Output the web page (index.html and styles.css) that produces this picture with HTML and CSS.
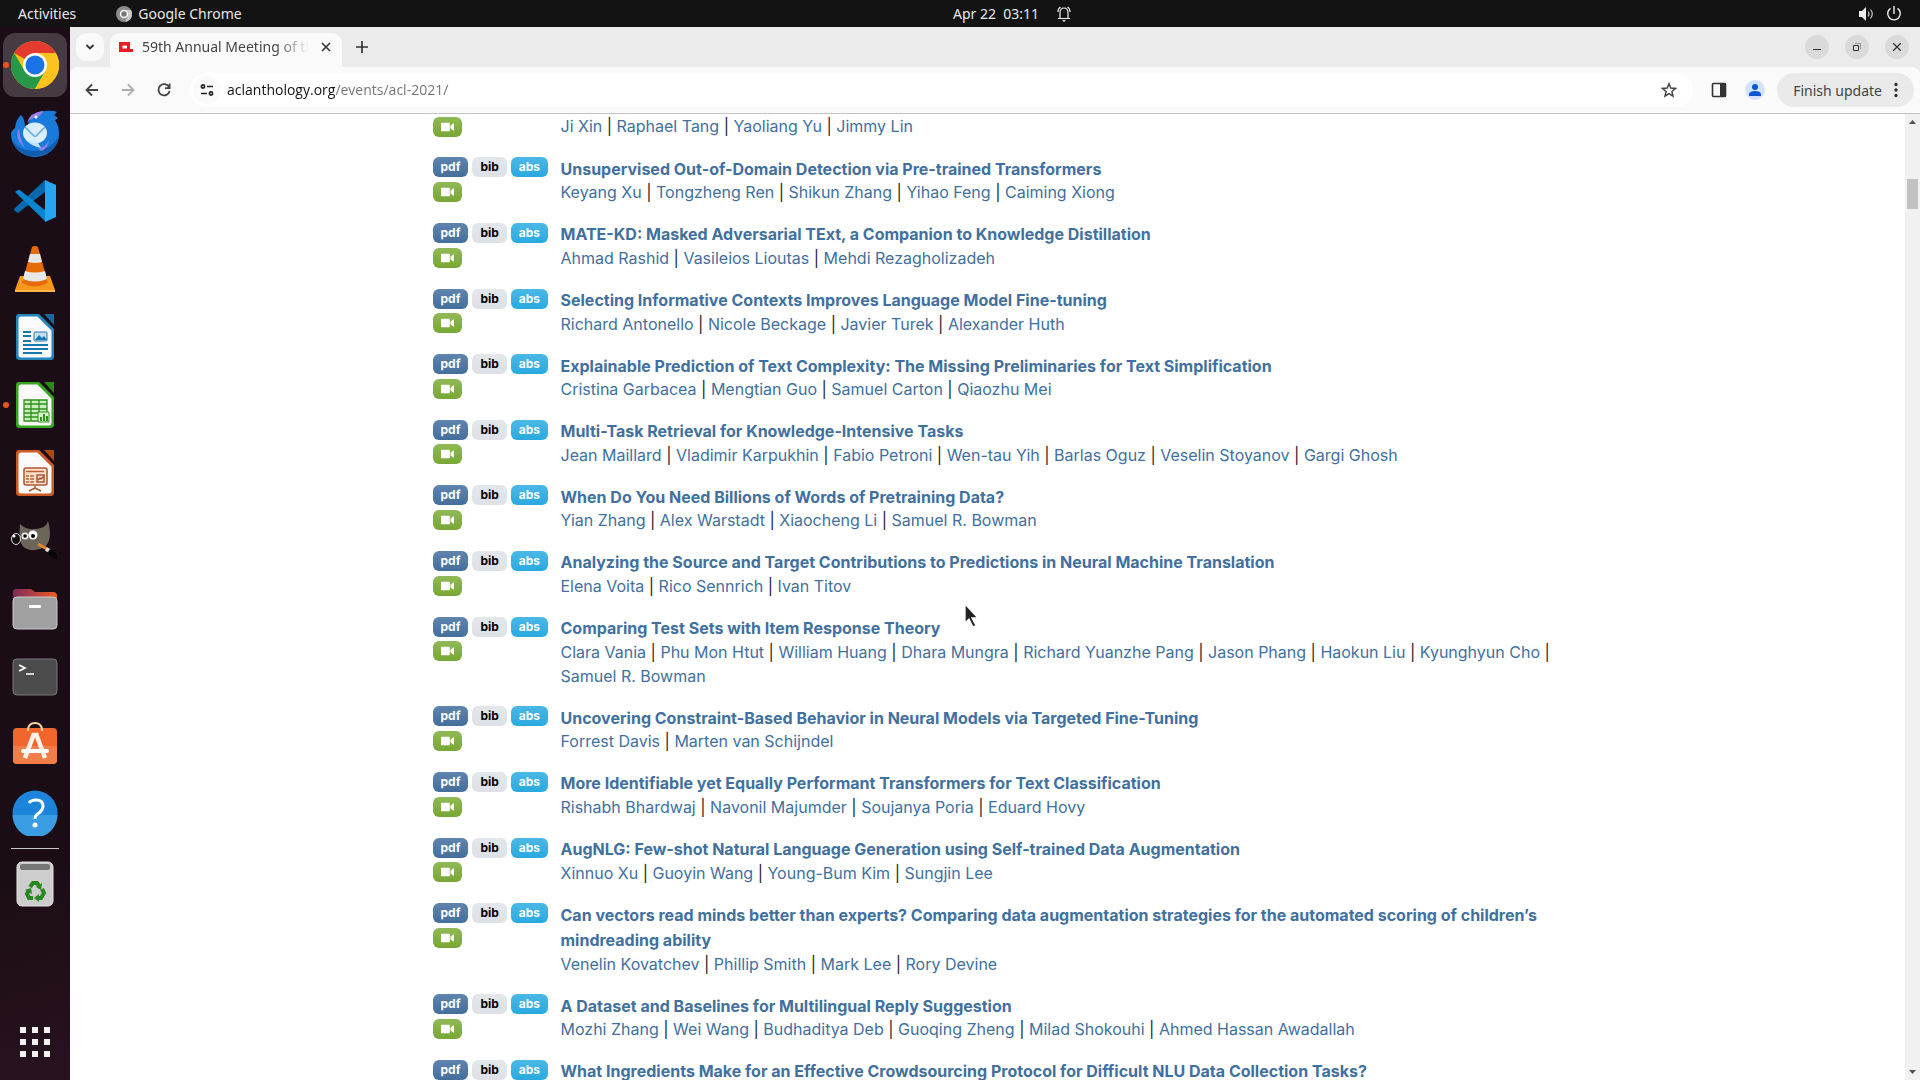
FILE: index.html
```html
<!DOCTYPE html>
<html lang="en">

<head>
    <meta charset="UTF-8" />
    <meta name="viewport" content="width=device-width, initial-scale=1.0" />
    <title>59th Annual Meeting of the Association for Computational Linguistics</title>
    <link rel="stylesheet" href="styles.css">
</head>

<body>
    <!-- shared icon -->
    <svg class="sprite" aria-hidden="true">
        <symbol id="video" viewBox="0 0 14 10">
            <path d="M0 1.2Q0 .5.7.5h8.1q.7 0 .7.7v7.6q0 .7-.7.7H.7Q0 9.500 0 8.800zM10.200 3.600 13 1.200q1-.5 1 .5v6.600q0 1-1 .5L10.200 6.400z" fill="#fff" />
        </symbol>
    </svg>

    <header class="topbar">
        <div class="topbar-left">
            <button>Activities</button>
            <button class="app-menu">
                <svg width="16" height="16" viewBox="0 0 16 16"><circle cx="8" cy="8" r="8" fill="#8b8b8b" /><path d="M8 4h7A8 8 0 0 1 9 16l3-6z" fill="#c8c8c8" /><circle cx="8" cy="8" r="3.500" fill="#777" stroke="#fff" stroke-width="1.500" /></svg>
                Google Chrome
            </button>
        </div>
        <button class="clock">Apr 22&nbsp; 03:11
            <svg width="14" height="16" viewBox="0 0 14 16" fill="none" stroke="#eee" stroke-width="1.200"><path d="M1 12.500h12M3 12V7q0-5 4-5t4 5v5M1 6q0-3.500 2.500-5M13 6q0-3.500-2.500-5" /><path d="M5 14h4l-2 2z" fill="#eee" stroke="none" /></svg>
        </button>
        <div class="topbar-right">
            <svg width="16" height="16" viewBox="0 0 16 16"><path d="M1 5h3l4-4v14l-4-4H1z" fill="#eee" /><path d="M10 5.500q2 2.500 0 5M12.500 3.500q3.500 4.500 0 9" fill="none" stroke="#ccc" stroke-width="1.200" /></svg>
            <svg width="16" height="16" viewBox="0 0 16 16" fill="none" stroke="#eee" stroke-width="1.400"><path d="M8 0v8M4.500 2.300a6.300 6.300 0 1 0 7 0" /></svg>
        </div>
    </header>

    <div class="desktop">
        <nav class="dock">
            <button class="dock-item active running" aria-label="Google Chrome">
                <svg width="48" height="48" viewBox="0 0 48 48"><circle cx="24" cy="24" r="24" fill="#fbc116" /><path d="M24 24 3.200 12A24 24 0 0 1 44.800 12z" fill="#e33b2e" /><path d="M3.200 12A24 24 0 0 0 24 48l10.400-18L24 24 13.600 30z" fill="#279847" /><path d="M24 12h20.800A24 24 0 0 1 24 48l10.400-18z" fill="#fcc31e" /><circle cx="24" cy="24" r="12" fill="#fff" /><circle cx="24" cy="24" r="9.500" fill="#1a73e8" /></svg>
            </button>
            <button class="dock-item" aria-label="Thunderbird">
                <svg width="48" height="48" viewBox="0 0 48 48"><path d="M0 24Q1 21 4 19 5 10 10 6q4 4 4 12l3-3Q22 2 34 2q8-1 12 1l-3 3 4 3-3 2q4 6 4 14a24 23 0 0 1-48 0z" fill="#187bdc" /><path d="M1 31Q9 43 25 42 41 40 48 27A24 22 0 0 1 1 31z" fill="#105cae" /><path d="M16 14Q19 3 32 2q-1 5-9 7-4 1-7 5z" fill="#977ee8" /><circle cx="25" cy="8" r="1.500" fill="#fff" /><path d="M8 19q-5 11 6 20-5-8-6-20zM27 39q8-1 11-8-1 9-8 11z" fill="#8b80ec" /><ellipse cx="24" cy="24" rx="12" ry="10.500" fill="#d9efff" /><path d="M15 31q5 6 15 8l-3-5z" fill="#c3e5ff" /><path d="m14 18 9 9q1 1 2 0l9-9" fill="none" stroke="#65a7df" stroke-width="1.500" /></svg>
            </button>
            <button class="dock-item" aria-label="Visual Studio Code">
                <svg width="42" height="42" viewBox="0 0 42 42"><path d="M1 28q-2 2 0 3l3 2 27-21V0z" fill="#0768ad" /><path d="m1 12 3-2q1-1 3 1l25 20v11z" fill="#0a85d1" /><path d="M31 0 42 5v32l-11 5z" fill="#26a6f2" /></svg>
            </button>
            <button class="dock-item" aria-label="VLC">
                <svg width="40" height="46" viewBox="0 0 40 46"><path d="M5 30h30l5 14v2H0v-2z" fill="#f79a1b" /><path d="M0 44h40v2H0z" fill="#ffb647" /><path d="M17 1q3-2 6 0l10 36q-13 7-26 0z" fill="#e66c0a" /><path d="M15 8h10l2 8q-7 2-14 0zM10 25q10 3 20 0l2 8q-12 5-24 0z" fill="#e8e8e8" /></svg>
            </button>
            <button class="dock-item" aria-label="LibreOffice Writer">
                <svg width="38" height="46" viewBox="0 0 38 46"><path d="M5 1h17l15 15v25q0 4-4 4H5q-4 0-4-4V5q0-4 4-4z" fill="#fafafa" stroke="#2285bb" stroke-width="3" /><path d="M28 0h10v11z" fill="#116b9e" /><path d="M7 18h8M7 22h8M7 27h8M7 31h25M7 35h25M7 39h19" stroke="#1377b2" stroke-width="2" /><rect x="18" y="18" width="13" height="9" rx="1" fill="#c3e1f1" stroke="#2c7ba8" /><path d="m19 26 4-5 3 3 2-2 3 4z" fill="#1377b2" /></svg>
            </button>
            <button class="dock-item running" aria-label="LibreOffice Calc">
                <svg width="38" height="46" viewBox="0 0 38 46"><path d="M5 1h17l15 15v25q0 4-4 4H5q-4 0-4-4V5q0-4 4-4z" fill="#fafafa" stroke="#36a51f" stroke-width="3" /><path d="M28 0h10v11z" fill="#268c12" /><path d="M8 18h23v21H8z" fill="#c9efbd" /><path d="M8 18h23v21H8zM8 22h23M8 27h23M8 31h23M8 35h23M15 18v21M23 18v21" fill="none" stroke="#2d9219" stroke-width="1.300" /><path d="M22 30h11v10H22z" fill="#d6f5cc" stroke="#2d9219" /><path d="M25 39v-4M28 39v-7M31 39v-5" stroke="#2d9219" stroke-width="2" /></svg>
            </button>
            <button class="dock-item" aria-label="LibreOffice Impress">
                <svg width="38" height="46" viewBox="0 0 38 46"><path d="M5 1h17l15 15v25q0 4-4 4H5q-4 0-4-4V5q0-4 4-4z" fill="#fafafa" stroke="#cd5923" stroke-width="3" /><path d="M28 0h10v11z" fill="#af450f" /><rect x="8" y="18" width="23" height="17" rx="2" fill="#fae1d2" stroke="#ad562d" stroke-width="1.500" /><path d="M10 21.500h18M10 26h3M14 26h4M10 29h3M14 29h4M10 32h3M14 32h4" stroke="#c15e30" stroke-width="1.700" /><path d="M21 25h7v7h-7zM22 30l2-2 1 1 3-3M19 36v2l-6 3M19 38l6 3" fill="none" stroke="#ad562d" stroke-width="1.500" /></svg>
            </button>
            <button class="dock-item" aria-label="GIMP">
                <svg width="48" height="40" viewBox="0 0 48 40"><path d="M9 3q6 6 14 5Q35 8 37 0q5 18-3 26-11 6-20 1Q7 23 9 3z" fill="#6b6659" /><ellipse cx="5" cy="18" rx="4.500" ry="5.500" fill="#111" stroke="#ddd" /><circle cx="3" cy="15" r="1.500" fill="#fff" /><circle cx="14" cy="15" r="3.500" fill="#eee" /><circle cx="22" cy="14" r="4.500" fill="#fff" /><circle cx="14" cy="15" r="1.800" /><circle cx="22" cy="15" r="2" /><path d="m27 23 9 5" stroke="#e6892c" stroke-width="3" /><path d="m35 28 4 2" stroke="#ddd" stroke-width="4" /><path d="M39 28q7 2 7 10-8-1-9-7z" fill="#050505" /></svg>
            </button>
            <button class="dock-item" aria-label="Files">
                <svg width="46" height="42" viewBox="0 0 46 42"><defs><linearGradient id="folder"><stop stop-color="#7b2a5a" /><stop offset="1" stop-color="#ef5a24" /></linearGradient></defs><path d="M1 4q0-3 3-3h15l4 3h18q4 0 4 4v12H1z" fill="url(#folder)" /><rect x="1" y="9" width="44" height="32" rx="4" fill="#a0a0a0" stroke="#c8c8c8" /><rect x="17" y="17" width="12" height="3" rx="1" fill="#fff" /></svg>
            </button>
            <button class="dock-item" aria-label="Terminal">
                <svg width="46" height="38" viewBox="0 0 46 38"><rect x="1" y="1" width="44" height="36" rx="4" fill="#4c4c4c" stroke="#777" /><path d="m7 7 6 3-6 3M14 16h8" fill="none" stroke="#fff" stroke-width="1.700" /></svg>
            </button>
            <button class="dock-item" aria-label="Ubuntu Software">
                <svg width="46" height="46" viewBox="0 3 46 46"><rect x="1" y="9" width="44" height="36" rx="4" fill="#f0662c" /><path d="M1 27h44v14q0 4-4 4H5q-4 0-4-4z" fill="#f17d49" /><path d="M16 12v-2q1-6 7-6t7 6v2" fill="none" stroke="#f8d39d" stroke-width="2" /><path d="m13 39 8.500-23h3L33 39" fill="none" stroke="#fff1e8" stroke-width="4.500" /><path d="M11 32h24" stroke="#fff" stroke-width="4" stroke-linecap="round" /></svg>
            </button>
            <button class="dock-item" aria-label="Help">
                <svg width="46" height="46" viewBox="0 0 46 46"><circle cx="23" cy="23" r="22.500" fill="#1c85db" /><path d="M.5 25h45a22.500 22.500 0 0 1-45 0z" fill="#3a9ce2" /><path d="M17 13q2-3 7-3 7 0 7 6 0 4-4 7-4 2-4 6" fill="none" stroke="#fff" stroke-width="3" /><circle cx="23" cy="35" r="2.500" fill="#fff" /></svg>
            </button>
            <hr>
            <button class="dock-item" aria-label="Trash">
                <svg width="38" height="46" viewBox="0 0 38 46"><rect x="1" y="1" width="36" height="44" rx="5" fill="#cdcdcd" stroke="#e4e4e4" /><rect x="4" y="3" width="30" height="6" rx="2" fill="#767676" /><g fill="none" stroke="#278720" stroke-width="4"><path d="m14 26 3-4h4l3 4" /><path d="m26 28 2 4-3 5h-4" /><path d="M17 37h-4l-2-4 2-4" /></g><path d="m26 22-1 7-5-3zM23 33v8l-5-4zM9 29l6-2 1 6z" fill="#278720" /></svg>
            </button>
            <button class="dock-item apps" aria-label="Show Applications">
                <svg width="30" height="30" viewBox="0 0 30 30"><path d="M3 0v30M15 0v30M27 0v30" stroke="#f2f2f2" stroke-width="6" stroke-dasharray="6" /></svg>
            </button>
        </nav>

        <div class="browser">
            <div class="tabstrip">
                <button class="tab-search" aria-label="Search tabs">
                    <svg width="10" height="10" viewBox="0 0 10 10" fill="none" stroke="#333" stroke-width="1.800"><path d="m1.500 3 3.500 3.500L8.500 3" /></svg>
                </button>
                <div class="tab">
                    <svg width="14" height="10" viewBox="0 0 14 10"><path d="M0 0h11v7h3v3H0zM3.500 3.500v3H8v-3z" fill="#ed1c24" fill-rule="evenodd" /></svg>
                    <span class="tab-title">59th Annual Meeting of the Association</span>
                    <button aria-label="Close tab">
                        <svg width="10" height="10" viewBox="0 0 10 10" stroke="#333" stroke-width="1.600"><path d="m1 1 8 8M9 1 1 9" /></svg>
                    </button>
                </div>
                <button class="new-tab" aria-label="New tab">
                    <svg width="12" height="12" viewBox="0 0 12 12" stroke="#333" stroke-width="1.700"><path d="M6 0v12M0 6h12" /></svg>
                </button>
                <div class="window-buttons">
                    <button aria-label="Minimize"><svg width="8" height="8" viewBox="0 0 8 8"><path d="M0 6h8v1H0z" fill="#333" /></svg></button>
                    <button aria-label="Restore"><svg width="8" height="8" viewBox="0 0 8 8" fill="none"><path d="M2 .5h5.500V6" stroke="#999" /><path d="M.5 2.500h5v5h-5z" stroke="#333" /></svg></button>
                    <button aria-label="Close"><svg width="8" height="8" viewBox="0 0 8 8" stroke="#333" stroke-width="1.300"><path d="m0 0 8 8M8 0 0 8" /></svg></button>
                </div>
            </div>

            <div class="toolbar">
                <button class="tool" aria-label="Back"><svg width="14" height="14" viewBox="0 0 14 14" fill="none" stroke="#444" stroke-width="1.800"><path d="M13 7H2M7 1.500 1.500 7 7 12.500" /></svg></button>
                <button class="tool" aria-label="Forward"><svg width="14" height="14" viewBox="0 0 14 14" fill="none" stroke="#adadad" stroke-width="1.800"><path d="M1 7h11M7 1.500 12.500 7 7 12.500" /></svg></button>
                <button class="tool" aria-label="Reload"><svg width="14" height="14" viewBox="0 0 14 14" fill="none" stroke="#444" stroke-width="1.800"><path d="M12 4a5.600 5.600 0 1 0 .6 4M12.600.5v4.600H8" /></svg></button>
                <div class="omnibox">
                    <button class="site-info" aria-label="View site information"><svg width="14" height="12" viewBox="0 0 14 12" fill="none" stroke="#222" stroke-width="1.700"><circle cx="3" cy="2.500" r="1.600" /><path d="M7 2.500h6M1 9.500h6" /><circle cx="11" cy="9.500" r="1.600" /></svg></button>
                    <input type="text" class="url" aria-label="Address and search bar" value="aclanthology.org/events/acl-2021/" />
                    <button class="star" aria-label="Bookmark this tab"><svg width="16" height="16" viewBox="0 0 16 16" fill="none" stroke="#444" stroke-width="1.500"><path d="m8 1.800 1.800 4.300 4.700.4-3.600 3 1.100 4.600L8 11.600l-4 2.500 1.100-4.600-3.600-3 4.700-.4z" /></svg></button>
                </div>
                <button class="tool" aria-label="Side panel"><svg width="16" height="16" viewBox="0 0 16 16"><rect x="1.500" y="1.500" width="13" height="13" rx="1" fill="none" stroke="#333" stroke-width="1.600" /><path d="M9 1h6v14H9z" fill="#333" /></svg></button>
                <button class="tool" aria-label="Profile"><svg width="20" height="20" viewBox="0 0 20 20"><circle cx="10" cy="10" r="10" fill="#d3e3fd" /><circle cx="10" cy="7" r="3" fill="#0b57d0" /><path d="M4 16v-1.500q0-3.500 6-3.500t6 3.500V16z" fill="#0b57d0" /></svg></button>
                <button class="update">Finish update
                    <svg width="4" height="16" viewBox="0 0 4 16" fill="#333"><circle cx="2" cy="2.500" r="1.700" /><circle cx="2" cy="8" r="1.700" /><circle cx="2" cy="13.500" r="1.700" /></svg>
                </button>
            </div>

            <div class="viewport">
                <main>
                    <div class="paper">
                        <div class="links"><a href="#" class="badge video" aria-label="video"><svg><use href="#video" /></svg></a></div>
                        <div><a href="#">Ji Xin</a> | <a href="#">Raphael Tang</a> | <a href="#">Yaoliang Yu</a> | <a href="#">Jimmy Lin</a></div>
                    </div>
                    <div class="paper">
                        <div class="links"><a href="#" class="badge pdf">pdf</a><a href="#" class="badge bib">bib</a><a href="#" class="badge abs">abs</a><br><a href="#" class="badge video" aria-label="video"><svg><use href="#video" /></svg></a></div>
                        <div><a href="#" class="title">Unsupervised Out-of-Domain Detection via Pre-trained Transformers</a><br>
                            <a href="#">Keyang Xu</a> | <a href="#">Tongzheng Ren</a> | <a href="#">Shikun Zhang</a> | <a href="#">Yihao Feng</a> | <a href="#">Caiming Xiong</a></div>
                    </div>
                    <div class="paper">
                        <div class="links"><a href="#" class="badge pdf">pdf</a><a href="#" class="badge bib">bib</a><a href="#" class="badge abs">abs</a><br><a href="#" class="badge video" aria-label="video"><svg><use href="#video" /></svg></a></div>
                        <div><a href="#" class="title">MATE-KD: Masked Adversarial TExt, a Companion to Knowledge Distillation</a><br>
                            <a href="#">Ahmad Rashid</a> | <a href="#">Vasileios Lioutas</a> | <a href="#">Mehdi Rezagholizadeh</a></div>
                    </div>
                    <div class="paper">
                        <div class="links"><a href="#" class="badge pdf">pdf</a><a href="#" class="badge bib">bib</a><a href="#" class="badge abs">abs</a><br><a href="#" class="badge video" aria-label="video"><svg><use href="#video" /></svg></a></div>
                        <div><a href="#" class="title">Selecting Informative Contexts Improves Language Model Fine-tuning</a><br>
                            <a href="#">Richard Antonello</a> | <a href="#">Nicole Beckage</a> | <a href="#">Javier Turek</a> | <a href="#">Alexander Huth</a></div>
                    </div>
                    <div class="paper">
                        <div class="links"><a href="#" class="badge pdf">pdf</a><a href="#" class="badge bib">bib</a><a href="#" class="badge abs">abs</a><br><a href="#" class="badge video" aria-label="video"><svg><use href="#video" /></svg></a></div>
                        <div><a href="#" class="title">Explainable Prediction of Text Complexity: The Missing Preliminaries for Text Simplification</a><br>
                            <a href="#">Cristina Garbacea</a> | <a href="#">Mengtian Guo</a> | <a href="#">Samuel Carton</a> | <a href="#">Qiaozhu Mei</a></div>
                    </div>
                    <div class="paper">
                        <div class="links"><a href="#" class="badge pdf">pdf</a><a href="#" class="badge bib">bib</a><a href="#" class="badge abs">abs</a><br><a href="#" class="badge video" aria-label="video"><svg><use href="#video" /></svg></a></div>
                        <div><a href="#" class="title">Multi-Task Retrieval for Knowledge-Intensive Tasks</a><br>
                            <a href="#">Jean Maillard</a> | <a href="#">Vladimir Karpukhin</a> | <a href="#">Fabio Petroni</a> | <a href="#">Wen-tau Yih</a> | <a href="#">Barlas Oguz</a> | <a href="#">Veselin Stoyanov</a> | <a href="#">Gargi Ghosh</a></div>
                    </div>
                    <div class="paper">
                        <div class="links"><a href="#" class="badge pdf">pdf</a><a href="#" class="badge bib">bib</a><a href="#" class="badge abs">abs</a><br><a href="#" class="badge video" aria-label="video"><svg><use href="#video" /></svg></a></div>
                        <div><a href="#" class="title">When Do You Need Billions of Words of Pretraining Data?</a><br>
                            <a href="#">Yian Zhang</a> | <a href="#">Alex Warstadt</a> | <a href="#">Xiaocheng Li</a> | <a href="#">Samuel R. Bowman</a></div>
                    </div>
                    <div class="paper">
                        <div class="links"><a href="#" class="badge pdf">pdf</a><a href="#" class="badge bib">bib</a><a href="#" class="badge abs">abs</a><br><a href="#" class="badge video" aria-label="video"><svg><use href="#video" /></svg></a></div>
                        <div><a href="#" class="title">Analyzing the Source and Target Contributions to Predictions in Neural Machine Translation</a><br>
                            <a href="#">Elena Voita</a> | <a href="#">Rico Sennrich</a> | <a href="#">Ivan Titov</a></div>
                    </div>
                    <div class="paper">
                        <div class="links"><a href="#" class="badge pdf">pdf</a><a href="#" class="badge bib">bib</a><a href="#" class="badge abs">abs</a><br><a href="#" class="badge video" aria-label="video"><svg><use href="#video" /></svg></a></div>
                        <div><a href="#" class="title">Comparing Test Sets with Item Response Theory</a><br>
                            <a href="#">Clara Vania</a> | <a href="#">Phu Mon Htut</a> | <a href="#">William Huang</a> | <a href="#">Dhara Mungra</a> | <a href="#">Richard Yuanzhe Pang</a> | <a href="#">Jason Phang</a> | <a href="#">Haokun Liu</a> | <a href="#">Kyunghyun Cho</a> | <a href="#">Samuel R. Bowman</a></div>
                    </div>
                    <div class="paper">
                        <div class="links"><a href="#" class="badge pdf">pdf</a><a href="#" class="badge bib">bib</a><a href="#" class="badge abs">abs</a><br><a href="#" class="badge video" aria-label="video"><svg><use href="#video" /></svg></a></div>
                        <div><a href="#" class="title">Uncovering Constraint-Based Behavior in Neural Models via Targeted Fine-Tuning</a><br>
                            <a href="#">Forrest Davis</a> | <a href="#">Marten van Schijndel</a></div>
                    </div>
                    <div class="paper">
                        <div class="links"><a href="#" class="badge pdf">pdf</a><a href="#" class="badge bib">bib</a><a href="#" class="badge abs">abs</a><br><a href="#" class="badge video" aria-label="video"><svg><use href="#video" /></svg></a></div>
                        <div><a href="#" class="title">More Identifiable yet Equally Performant Transformers for Text Classification</a><br>
                            <a href="#">Rishabh Bhardwaj</a> | <a href="#">Navonil Majumder</a> | <a href="#">Soujanya Poria</a> | <a href="#">Eduard Hovy</a></div>
                    </div>
                    <div class="paper">
                        <div class="links"><a href="#" class="badge pdf">pdf</a><a href="#" class="badge bib">bib</a><a href="#" class="badge abs">abs</a><br><a href="#" class="badge video" aria-label="video"><svg><use href="#video" /></svg></a></div>
                        <div><a href="#" class="title">AugNLG: Few-shot Natural Language Generation using Self-trained Data Augmentation</a><br>
                            <a href="#">Xinnuo Xu</a> | <a href="#">Guoyin Wang</a> | <a href="#">Young-Bum Kim</a> | <a href="#">Sungjin Lee</a></div>
                    </div>
                    <div class="paper">
                        <div class="links"><a href="#" class="badge pdf">pdf</a><a href="#" class="badge bib">bib</a><a href="#" class="badge abs">abs</a><br><a href="#" class="badge video" aria-label="video"><svg><use href="#video" /></svg></a></div>
                        <div><a href="#" class="title">Can vectors read minds better than experts? Comparing data augmentation strategies for the automated scoring of children’s mindreading ability</a><br>
                            <a href="#">Venelin Kovatchev</a> | <a href="#">Phillip Smith</a> | <a href="#">Mark Lee</a> | <a href="#">Rory Devine</a></div>
                    </div>
                    <div class="paper">
                        <div class="links"><a href="#" class="badge pdf">pdf</a><a href="#" class="badge bib">bib</a><a href="#" class="badge abs">abs</a><br><a href="#" class="badge video" aria-label="video"><svg><use href="#video" /></svg></a></div>
                        <div><a href="#" class="title">A Dataset and Baselines for Multilingual Reply Suggestion</a><br>
                            <a href="#">Mozhi Zhang</a> | <a href="#">Wei Wang</a> | <a href="#">Budhaditya Deb</a> | <a href="#">Guoqing Zheng</a> | <a href="#">Milad Shokouhi</a> | <a href="#">Ahmed Hassan Awadallah</a></div>
                    </div>
                    <div class="paper">
                        <div class="links"><a href="#" class="badge pdf">pdf</a><a href="#" class="badge bib">bib</a><a href="#" class="badge abs">abs</a></div>
                        <div><a href="#" class="title">What Ingredients Make for an Effective Crowdsourcing Protocol for Difficult NLU Data Collection Tasks?</a></div>
                    </div>
                </main>
                <div class="scrollbar">
                    <svg width="7" height="4" viewBox="0 0 7 4"><path d="M0 4h7L3.500 0z" fill="#505050" /></svg>
                    <div class="thumb"></div>
                    <svg width="7" height="4" viewBox="0 0 7 4"><path d="M0 0h7L3.500 4z" fill="#505050" /></svg>
                </div>
            </div>
        </div>
    </div>

    <svg class="pointer" width="16" height="26" viewBox="0 0 16 26"><path d="M1 1v19l4-4 4 8 3-1.500-4-7.500h6z" fill="#222" stroke="#fff" stroke-width="1.300" /></svg>
</body>

</html>
```

FILE: styles.css
```css
* {
    box-sizing: border-box;
}

body {
    margin: 0;
    height: 100vh;
    display: flex;
    flex-direction: column;
    overflow: hidden;
    font-family: "Noto Sans", "Open Sans", sans-serif;
    font-size: 14px;
}

button {
    display: flex;
    align-items: center;
    justify-content: center;
    padding: 0;
    border: 0;
    background: none;
    color: inherit;
    font: inherit;
}

svg {
    flex: none;
}

.sprite {
    display: none;
}

/* top bar */
.topbar {
    flex: none;
    display: grid;
    grid-template-columns: 1fr auto 1fr;
    height: 27px;
    padding: 0 18px;
    background-color: #131313;
    color: #e8e8e8;
}

.topbar-left,
.topbar-right {
    display: flex;
    align-items: center;
}

.topbar-left {
    gap: 40px;
}

.app-menu {
    gap: 6px;
}

.clock {
    gap: 18px;
    padding-left: 104px;
}

.topbar-right {
    justify-content: flex-end;
    gap: 12px;
}

/* dock */
.desktop {
    flex: 1;
    min-height: 0;
    display: flex;
}

.dock {
    flex: none;
    display: flex;
    flex-direction: column;
    align-items: center;
    gap: 4px;
    width: 70px;
    padding: 6px 3px;
    background: linear-gradient(165deg, #1b0d15 80%, #28121f);
}

.dock-item {
    position: relative;
    flex: none;
    width: 64px;
    height: 64px;
    border-radius: 12px;
}

.dock-item.active {
    background-color: #463b42;
}

.dock-item.running::before {
    content: "";
    position: absolute;
    left: 0;
    width: 6px;
    height: 6px;
    border-radius: 50%;
    background-color: #e95420;
}

.dock hr {
    width: 48px;
    height: 1px;
    margin: -1px 0;
    border: 0;
    background-color: #c8c4c6;
}

.apps {
    margin-top: auto;
}

/* browser window */
.browser {
    flex: 1;
    min-width: 0;
    display: flex;
    flex-direction: column;
    background-color: #ebebeb;
    color: #444;
}

.tabstrip {
    flex: none;
    display: flex;
    height: 40px;
    padding: 6px 11px 0 6px;
}

.tab-search {
    width: 28px;
    height: 28px;
    margin-right: 6px;
    border-radius: 10px;
    background-color: #fafafa;
}

.tab {
    display: flex;
    align-items: center;
    width: 232px;
    padding: 0 9px 6px;
    border-radius: 10px 10px 0 0;
    background-color: #fafafa;
}

.tab-title {
    flex: 1;
    margin: 0 10px 0 9px;
    padding-bottom: 2px;
    overflow: hidden;
    white-space: nowrap;
    -webkit-mask-image: linear-gradient(to right, #000 80%, transparent);
    mask-image: linear-gradient(to right, #000 80%, transparent);
}

.tab button {
    width: 14px;
    height: 14px;
}

.new-tab {
    width: 28px;
    height: 28px;
    margin-left: 6px;
}

.window-buttons {
    display: flex;
    gap: 16px;
    margin: 2px 0 0 auto;
}

.window-buttons button {
    width: 24px;
    height: 24px;
    border-radius: 50%;
    background-color: #dadada;
}

.toolbar {
    flex: none;
    display: flex;
    align-items: center;
    gap: 8px;
    height: 47px;
    padding: 0 6px 0 8px;
    border-bottom: 1px solid #c4c4c4;
    border-radius: 8px 8px 0 0;
    background-color: #fafafa;
}

.tool {
    width: 28px;
    height: 28px;
}

.omnibox {
    flex: 1;
    display: flex;
    align-items: center;
    height: 34px;
    margin: 0 4px;
    padding: 0 10px 0 3px;
    border-radius: 17px;
    background-color: #fff;
}

.site-info {
    width: 28px;
    height: 28px;
    border-radius: 50%;
    background-color: #fafafa;
}

.url {
    flex: 1;
    padding: 0 6px 2px;
    border: 0;
    outline: 0;
    font: 14px "Open Sans", sans-serif;
    /* host in black, path in grey */
    color: transparent;
    background: linear-gradient(to right, #111 114px, #707070 114px);
    -webkit-background-clip: text;
    background-clip: text;
}

.star {
    width: 28px;
    height: 28px;
}

.update {
    gap: 12px;
    height: 34px;
    padding: 0 16px;
    border-radius: 17px;
    background-color: #eaeaea;
}

/* page */
.viewport {
    flex: 1;
    min-height: 0;
    display: flex;
    background-color: #fff;
}

main {
    flex: 1;
    overflow: hidden;
    padding: 0 7px 0 15px;
    font: 16px/24px Inter, sans-serif;
    color: #212529;
}

.paper {
    display: flex;
    max-width: 1118px;
    margin: 0 auto 16px;
}

.paper a {
    color: #4170a0;
    text-decoration: none;
}

.paper .title {
    font-weight: 700;
    vertical-align: middle;
}

.links {
    flex: none;
    width: 120px;
    margin-right: 8px;
}

.paper .badge {
    display: inline-block;
    height: 20px;
    margin: 0 4px 2px 0;
    padding: 0 8px;
    border-radius: 6px;
    font-size: 12px;
    font-weight: 700;
    line-height: 20px;
    vertical-align: middle;
    color: #fff;
}

.badge.pdf {
    background: linear-gradient(#5f85ae, #446e9b);
}

.paper .badge.bib {
    background: linear-gradient(#e3e6ea, #dde1e6);
    color: #000;
}

.badge.abs {
    background: linear-gradient(#4cb8e6, #29a9e0);
}

.badge.video {
    background: linear-gradient(#8fb958, #78a734);
}

.badge svg {
    display: block;
    width: 13px;
    height: 10px;
    margin: 5px 0;
}

.scrollbar {
    flex: none;
    display: flex;
    flex-direction: column;
    align-items: center;
    width: 15px;
    padding: 6px 0;
    background-color: #f1f1f1;
}

.thumb {
    width: 11px;
    height: 30px;
    margin: 55px 0 auto;
    background-color: #c1c1c1;
}

.pointer {
    position: absolute;
    left: 964px;
    top: 603px;
}
```
